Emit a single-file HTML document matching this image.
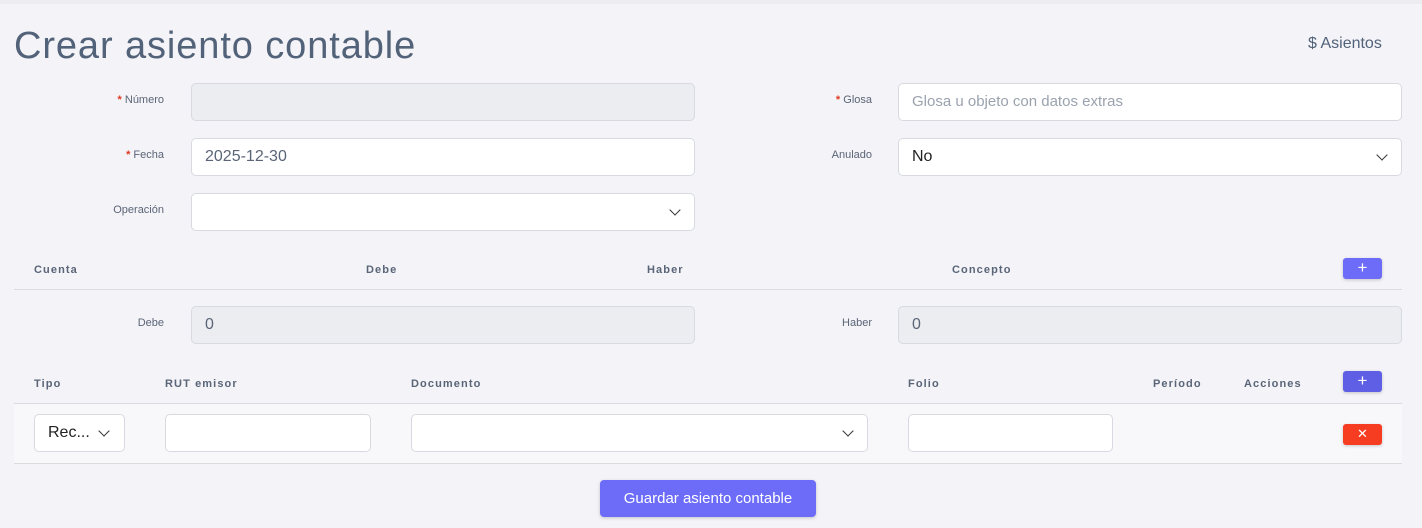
<!DOCTYPE html><html><head><style>
body{margin:0;width:1422px;height:528px;background:#f3f3f8;font-family:"Liberation Sans",sans-serif;position:relative;overflow:hidden}
.a{position:absolute}
h1{position:absolute;left:14px;top:25px;margin:0;font-weight:400;font-size:38px;color:#526279;letter-spacing:0.9px}
.lbl{position:absolute;font-size:11px;color:#5b6577;text-align:right;width:150px}
.lbl b{color:#e0391f;font-weight:700}
.in{position:absolute;box-sizing:border-box;border:1px solid #d7dae0;border-radius:5px;background:#fff;height:38px;font-size:16px;color:#5a6577;padding:9px 13px}
.dis{background:#ecedf1}
.chev{position:absolute;right:15px;top:12px;width:7px;height:7px;border-right:1.3px solid #333;border-bottom:1.3px solid #333;transform:rotate(45deg)}
.th{position:absolute;font-size:11px;font-weight:700;color:#5a6577;letter-spacing:1.1px}
.btn{position:absolute;width:39px;height:21px;border-radius:3px;color:#fff;text-align:center;font-size:17px;line-height:20px;box-shadow:0 1px 3px rgba(0,0,0,.2)}
.line{position:absolute;left:14px;width:1388px;height:1px;background:#d9dbe0}
</style></head><body>
<div class="a" style="left:0;top:0;width:1422px;height:4px;background:#ececf1"></div>
<h1>Crear asiento contable</h1>
<div class="a" style="left:1308px;top:35px;font-size:16px;color:#526279">$ Asientos</div>
<div class="lbl" style="left:14px;top:94px"><b>*</b> Número</div>
<div class="in dis" style="left:191px;top:83px;width:504px"></div>
<div class="lbl" style="left:14px;top:149px"><b>*</b> Fecha</div>
<div class="in" style="left:191px;top:138px;width:504px">2025-12-30</div>
<div class="lbl" style="left:14px;top:204px">Operación</div>
<div class="in" style="left:191px;top:193px;width:504px"><div class="chev"></div></div>
<div class="lbl" style="left:722px;top:94px"><b>*</b> Glosa</div>
<div class="in" style="left:898px;top:83px;width:504px;color:#9aa2ae;font-size:15px">Glosa u objeto con datos extras</div>
<div class="lbl" style="left:722px;top:149px">Anulado</div>
<div class="in" style="left:898px;top:138px;width:504px;color:#222">No<div class="chev"></div></div>
<div class="th" style="left:34px;top:264px">Cuenta</div>
<div class="th" style="left:366px;top:264px">Debe</div>
<div class="th" style="left:647px;top:264px">Haber</div>
<div class="th" style="left:952px;top:264px">Concepto</div>
<div class="btn" style="left:1343px;top:258px;background:#6c6cf8">+</div>
<div class="line" style="top:289px"></div>
<div class="lbl" style="left:14px;top:317px">Debe</div>
<div class="in dis" style="left:191px;top:306px;width:504px">0</div>
<div class="lbl" style="left:722px;top:317px">Haber</div>
<div class="in dis" style="left:898px;top:306px;width:504px">0</div>
<div class="th" style="left:34px;top:378px">Tipo</div>
<div class="th" style="left:165px;top:378px">RUT emisor</div>
<div class="th" style="left:411px;top:378px">Documento</div>
<div class="th" style="left:908px;top:378px">Folio</div>
<div class="th" style="left:1153px;top:378px">Período</div>
<div class="th" style="left:1244px;top:378px">Acciones</div>
<div class="btn" style="left:1343px;top:371px;background:#5f5fe6">+</div>
<div class="line" style="top:403px"></div>
<div class="a" style="left:14px;top:404px;width:1388px;height:59px;background:#f8f8fb"></div>
<div class="line" style="top:463px"></div>
<div class="in" style="left:34px;top:414px;width:91px;color:#222">Rec...<div class="chev" style="right:16px"></div></div>
<div class="in" style="left:165px;top:414px;width:206px"></div>
<div class="in" style="left:411px;top:414px;width:457px"><div class="chev"></div></div>
<div class="in" style="left:908px;top:414px;width:205px"></div>
<div class="btn" style="left:1343px;top:424px;background:#f63d22;font-size:13px">✕</div>
<div class="a" style="left:600px;top:480px;width:216px;height:37px;border-radius:4px;background:#6c6cf8;color:#fff;font-size:15px;text-align:center;line-height:37px;box-shadow:0 1px 3px rgba(0,0,0,.2)">Guardar asiento contable</div>
</body></html>
